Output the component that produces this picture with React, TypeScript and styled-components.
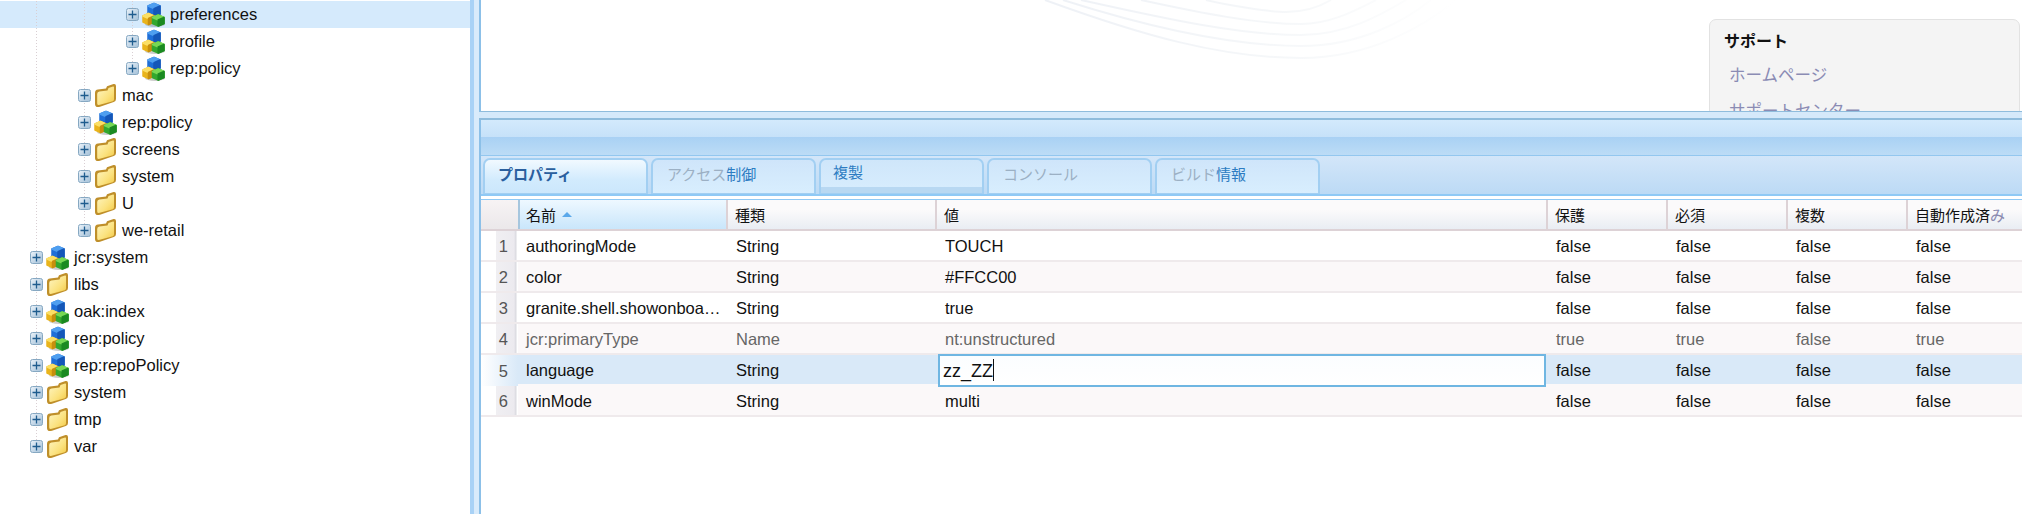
import React from "react";
import styled, { createGlobalStyle } from "styled-components";

const Global = createGlobalStyle`
  html, body { margin: 0; padding: 0; background: #fff; }
  body { font-family: "Liberation Sans", "Noto Sans CJK JP", sans-serif; color: #111; }
`;

const Root = styled.div`
  display: flex;
  width: 2022px;
  height: 514px;
  overflow: hidden;
`;

/* ---------- tree ---------- */
const TreePane = styled.div`
  width: 470px;
  flex: none;
  padding-top: 1px;
  background: #fff;
`;
const TreeRow = styled.div<{ $selected?: boolean }>`
  display: flex;
  align-items: stretch;
  height: 27px;
  padding-left: 12px;
  font-size: 16.5px;
  background: ${(p) => (p.$selected ? "#d5eafc" : "transparent")};
`;
const dotted = "repeating-linear-gradient(to bottom, #d9cfd3 0 1px, transparent 1px 3px)";
const Guide = styled.span`
  width: 48px;
  flex: none;
  background: ${dotted} 24px 0 / 1px 100% no-repeat;
`;
const ExpanderCell = styled.span<{ $last?: boolean }>`
  width: 31px;
  flex: none;
  display: flex;
  align-items: center;
  padding-left: 18px;
  box-sizing: border-box;
  background: ${dotted} 24px 0 / 1px ${(p) => (p.$last ? "50%" : "100%")} no-repeat;
`;
const NodeGlyph = styled.svg`
  width: 23px;
  height: 25px;
  margin-left: 3px;
  flex: none;
  align-self: center;
`;
const TreeLabel = styled.span`
  margin-left: 5px;
  line-height: 27px;
  white-space: nowrap;
`;

const Expander = () => (
  <svg width="13" height="13" viewBox="0 0 13 13" style={{ flex: "none" }}>
    <defs>
      <linearGradient id="exp" x1="0" y1="0" x2="1" y2="1">
        <stop offset="0" stopColor="#eaf2f9" />
        <stop offset="1" stopColor="#a3c0d8" />
      </linearGradient>
    </defs>
    <rect x="0.5" y="0.5" width="12" height="12" rx="2" fill="url(#exp)" stroke="#86a8c2" />
    <path d="M2.500 6.500h8M6.500 2.500v8" stroke="#1f5c8e" strokeWidth="1.300" />
  </svg>
);

const NodeIcon = () => (
  <NodeGlyph viewBox="0 0 23 25">
    <ellipse cx="13" cy="22" rx="10" ry="3" fill="#444" opacity="0.28" />
    <g strokeLinejoin="round" strokeWidth="1.500">
      <path d="M6 4l6-2.600L18 4v8l-6 2.600L6 12z" fill="#1f6fd8" stroke="#1f6fd8" />
      <path d="M6 4l6-2.600L18 4l-6 2.600z" fill="#4f9ff0" stroke="#4f9ff0" />
      <path d="M12 6.600L18 4v8l-6 2.600z" fill="#1557b8" stroke="#1557b8" />
      <path d="M1 14l5.500-2.500L12 14v6l-5.500 2.500L1 20z" fill="#e9b41c" stroke="#e9b41c" />
      <path d="M1 14l5.500-2.500L12 14l-5.500 2.500z" fill="#fbdf66" stroke="#fbdf66" />
      <path d="M6.500 16.500L12 14v6l-5.500 2.500z" fill="#c78e0e" stroke="#c78e0e" />
      <path d="M10.500 15.500l5.700-2.500 5.800 2.500v6L16.200 24l-5.700-2.500z" fill="#33a82f" stroke="#33a82f" />
      <path d="M10.500 15.500l5.700-2.500 5.800 2.500-5.800 2.500z" fill="#78d855" stroke="#78d855" />
      <path d="M16.200 18l5.800-2.500v6L16.200 24z" fill="#1b8a22" stroke="#1b8a22" />
    </g>
  </NodeGlyph>
);

const FolderIcon = () => (
  <NodeGlyph viewBox="0 0 23 25">
    <defs>
      <linearGradient id="fold" x1="0" y1="0" x2="1" y2="1">
        <stop offset="0" stopColor="#fef6c4" />
        <stop offset="0.6" stopColor="#fbe27f" />
        <stop offset="1" stopColor="#f3c945" />
      </linearGradient>
    </defs>
    <path d="M1 10q0-3 3-3.400l8-1 1-2.300 6.500-2.300Q22 .5 22 3v13q0 2.300-2.300 3L6 23.800Q1 25 1 21z" fill="#bf8f2a" />
    <path d="M3.200 11q0-2.300 2.300-2.600l8-1 1-2.300 4.500-1.600q1-.3 1 .7v12.400q0 1.200-1.200 1.600L5.800 21.800q-2.600.6-2.600-1.400z" fill="url(#fold)" />
  </NodeGlyph>
);

type Node = { level: number; name: string; kind: "node" | "folder"; last?: boolean; selected?: boolean };
const tree: Node[] = [
  { level: 3, name: "preferences", kind: "node", selected: true },
  { level: 3, name: "profile", kind: "node" },
  { level: 3, name: "rep:policy", kind: "node", last: true },
  { level: 2, name: "mac", kind: "folder" },
  { level: 2, name: "rep:policy", kind: "node" },
  { level: 2, name: "screens", kind: "folder" },
  { level: 2, name: "system", kind: "folder" },
  { level: 2, name: "U", kind: "folder" },
  { level: 2, name: "we-retail", kind: "folder", last: true },
  { level: 1, name: "jcr:system", kind: "node" },
  { level: 1, name: "libs", kind: "folder" },
  { level: 1, name: "oak:index", kind: "node" },
  { level: 1, name: "rep:policy", kind: "node" },
  { level: 1, name: "rep:repoPolicy", kind: "node" },
  { level: 1, name: "system", kind: "folder" },
  { level: 1, name: "tmp", kind: "folder" },
  { level: 1, name: "var", kind: "folder", last: true },
];

/* ---------- main ---------- */
const Splitter = styled.div`
  width: 5px;
  flex: none;
  background: #d9ebfb;
  border-left: 4px solid #a9d2f6;
`;
const Main = styled.div`
  flex: 1;
  min-width: 0;
  display: flex;
  flex-direction: column;
  background: #d5e9fa;
`;
const TopPanel = styled.div`
  position: relative;
  height: 111px;
  flex: none;
  display: flex;
  justify-content: flex-end;
  padding-right: 2px;
  background: #fff;
  border-left: 2px solid #8cc0e8;
  border-bottom: 1px solid #8fbcdc;
  overflow: hidden;
`;
const Swoosh = styled.svg`
  position: absolute;
  left: 0;
  top: 0;
  width: 1540px;
  height: 111px;
`;
const SupportBox = styled.div`
  position: relative;
  width: 311px;
  height: 130px;
  margin-top: 19px;
  box-sizing: border-box;
  padding: 11px 14px;
  background: #f4f4f4;
  border: 1px solid #e2e2e2;
  border-radius: 7px;
`;
const SupportTitle = styled.div`
  font-size: 16px;
  font-weight: 700;
  line-height: 22px;
  color: #111;
`;
const SupportLink = styled.div`
  margin-left: 5px;
  margin-top: 11px;
  font-size: 16.5px;
  line-height: 23px;
  color: #8b8cb4;
  & + & { margin-top: 13px; }
`;
const Band = styled.div`
  height: 6px;
  flex: none;
  border-bottom: 2px solid #8fbcdc;
`;
const Detail = styled.div`
  flex: 1;
  min-height: 0;
  display: flex;
  flex-direction: column;
  background: #fff;
  border-left: 2px solid #8cc0e8;
`;
const DetailHeader = styled.div`
  height: 35px;
  flex: none;
  background: linear-gradient(to bottom, #d3eafc 0, #c6e1f9 48%, #a9d1f4 49%, #bcdcf6 100%);
  border-bottom: 1px solid #93c7ef;
`;
const TabStrip = styled.div`
  display: flex;
  gap: 3.5px;
  height: 36px;
  flex: none;
  padding: 2px 0 0 2px;
  background: linear-gradient(to bottom, #d3e6f9 0, #bcdaf5 100%);
  border-bottom: 2px solid #8fc9f5;
`;
const Tab = styled.div<{ $active?: boolean; $raised?: boolean }>`
  width: 164.5px;
  box-sizing: border-box;
  height: 36px;
  padding: ${(p) => (p.$raised ? "2px 0 0 12px" : p.$active ? "4px 0 0 13px" : "4px 0 0 14px")};
  font-size: 15px;
  line-height: 22px;
  white-space: nowrap;
  border: 2px solid #a2cff2;
  border-bottom-width: 1px;
  border-radius: 7px 7px 0 0;
  color: ${(p) => (p.$active ? "#2a5f9e" : "#2d7cc2")};
  font-weight: ${(p) => (p.$active ? 700 : 400)};
  background: ${(p) =>
    p.$active
      ? "linear-gradient(to bottom, #f1f9ff 0, #d2ebfd 60%, #cbe7fc 100%)"
      : p.$raised
      ? "linear-gradient(to bottom, #cfe6fa 0, #d6ecfd 82%, #b8d8f2 83%, #b8d8f2 100%)"
      : "linear-gradient(to bottom, #cfe5fa 0, #d8eefe 100%)"};
`;
const Faded = styled.span`
  color: #9cb0c4;
`;
const Table = styled.div`
  padding-top: 2px;
  background: #fff;
`;
const columns = "37px 208px 209px 611px 120px 120px 120px 1fr";
const HeadRow = styled.div`
  display: grid;
  grid-template-columns: ${columns};
  height: 29px;
  margin-top: 1px;
  border-top: 1px solid #8fc9f5;
  border-bottom: 2px solid #ddd2d6;
`;
const HeadCell = styled.div<{ $sorted?: boolean; $blank?: boolean }>`
  display: flex;
  align-items: center;
  gap: 6px;
  padding-left: ${(p) => (p.$sorted ? "6px" : "7px")};
  font-size: 15px;
  white-space: nowrap;
  overflow: hidden;
  color: #111;
  border-left: ${(p) => (p.$blank ? "none" : p.$sorted ? "2px solid #a6c6de" : "2px solid #ddd2d6")};
  background: ${(p) =>
    p.$sorted
      ? "linear-gradient(to bottom, #eef8ff 0, #c9e6fb 100%)"
      : p.$blank
      ? "linear-gradient(to bottom, #f7f3f4 0, #ebe8ea 100%)"
      : "linear-gradient(to bottom, #fbfafb 0, #fbfafb 35%, #e9edf3 100%)"};
`;
const SortArrow = styled.span`
  width: 0;
  height: 0;
  border-left: 5px solid transparent;
  border-right: 5px solid transparent;
  border-bottom: 5px solid #5aa8ea;
`;
const FadedHead = styled.span`
  color: #8a8ab0;
`;
const Row = styled.div<{ $even?: boolean; $selected?: boolean }>`
  display: grid;
  grid-template-columns: ${columns};
  height: 29px;
  margin-bottom: 2.1px;
  align-items: stretch;
  font-size: 16.5px;
  background: ${(p) => (p.$selected ? "#d9e9f8" : p.$even ? "#fbf8f9" : "#fff")};
  box-shadow: 0 2px 0 ${(p) => (p.$selected ? "#fbf8f9" : "#efeaec")};
`;
const NumCell = styled.div<{ $selected?: boolean }>`
  display: flex;
  align-items: center;
  justify-content: flex-end;
  padding: 1px 10px 0 0;
  font-size: 16.5px;
  color: #555;
  background: ${(p) =>
    p.$selected
      ? "linear-gradient(to right, #fff 0, #d9e9f8 100%)"
      : "linear-gradient(to right, #fff 0, #fff 15px, #f0eff2 15px, #eceaef 33px, #d9d9df 35px, #fff 36px)"};
`;
const Cell = styled.div<{ $muted?: boolean; $first?: boolean }>`
  padding: 0 3px 0 ${(p) => (p.$first ? "8px" : "10px")};
  line-height: 31px;
  white-space: nowrap;
  overflow: hidden;
  text-overflow: ellipsis;
  color: ${(p) => (p.$muted ? "#666" : "#111")};
`;
const EditCell = styled.div`
  position: relative;
  z-index: 1;
  height: 33px;
  margin: -1px 0 0 3px;
  box-sizing: border-box;
  padding-left: 3px;
  border: 2px solid #6fb6e2;
  background: linear-gradient(to bottom, #fbfdff 0, #fff 100%);
  font-size: 18px;
  line-height: 30px;
  color: #111;
`;
const Caret = styled.span`
  display: inline-block;
  width: 1px;
  height: 22px;
  background: #111;
  vertical-align: -4px;
`;

const rows = [
  ["authoringMode", "String", "TOUCH", "false", "false", "false", "false"],
  ["color", "String", "#FFCC00", "false", "false", "false", "false"],
  ["granite.shell.showonboarding620", "String", "true", "false", "false", "false", "false"],
  ["jcr:primaryType", "Name", "nt:unstructured", "true", "true", "false", "true"],
  ["language", "String", "zz_ZZ", "false", "false", "false", "false"],
  ["winMode", "String", "multi", "false", "false", "false", "false"],
];

const arcs = [
  "M564 0C660 35 740 58 820 58C890 58 945 25 975 0",
  "M582 0C670 28 750 46 820 46C880 46 925 20 950 0",
  "M600 0C690 20 760 35 820 35C865 35 900 15 925 0",
  "M660 0C720 13 775 24 820 24C850 24 875 10 895 0",
  "M725 0C750 6 790 12 805 12C825 12 840 6 850 0",
];

export default function App() {
  return (
    <Root>
      <Global />
      <TreePane>
        {tree.map((n, i) => (
          <TreeRow key={i} $selected={n.selected}>
            {Array.from({ length: n.level - 1 }).map((_, g) => (
              <Guide key={g} />
            ))}
            <ExpanderCell $last={n.last}>
              <Expander />
            </ExpanderCell>
            {n.kind === "node" ? <NodeIcon /> : <FolderIcon />}
            <TreeLabel>{n.name}</TreeLabel>
          </TreeRow>
        ))}
      </TreePane>
      <Splitter />
      <Main>
        <TopPanel>
          <Swoosh viewBox="0 0 1540 111" fill="none">
            <defs>
              <linearGradient id="arcFade" gradientUnits="userSpaceOnUse" x1="564" y1="0" x2="975" y2="0">
                <stop offset="0" stopColor="#eef1f6" />
                <stop offset="0.55" stopColor="#f5f7f9" />
                <stop offset="1" stopColor="#ffffff" />
              </linearGradient>
            </defs>
            {arcs.map((d, i) => (
              <path key={i} d={d} stroke="url(#arcFade)" strokeWidth="2" />
            ))}
          </Swoosh>
          <SupportBox>
            <SupportTitle>サポート</SupportTitle>
            <SupportLink>ホームページ</SupportLink>
            <SupportLink>サポートセンター</SupportLink>
          </SupportBox>
        </TopPanel>
        <Band />
        <Detail>
          <DetailHeader />
          <TabStrip>
            <Tab $active>プロパティ</Tab>
            <Tab>
              <Faded>アクセス</Faded>制御
            </Tab>
            <Tab $raised>複製</Tab>
            <Tab>
              <Faded>コンソール</Faded>
            </Tab>
            <Tab>
              <Faded>ビルド</Faded>情報
            </Tab>
          </TabStrip>
          <Table>
            <HeadRow>
              <HeadCell $blank />
              <HeadCell $sorted>
                名前
                <SortArrow />
              </HeadCell>
              <HeadCell>種類</HeadCell>
              <HeadCell>値</HeadCell>
              <HeadCell>保護</HeadCell>
              <HeadCell>必須</HeadCell>
              <HeadCell>複数</HeadCell>
              <HeadCell>
                <span>
                  自動作成済<FadedHead>み</FadedHead>
                </span>
              </HeadCell>
            </HeadRow>
            {rows.map((r, i) => {
              const selected = i === 4;
              const muted = i === 3;
              return (
                <Row key={i} $even={i % 2 === 1} $selected={selected}>
                  <NumCell $selected={selected}>{i + 1}</NumCell>
                  {r.map((v, c) =>
                    selected && c === 2 ? (
                      <EditCell key={c}>
                        {v}
                        <Caret />
                      </EditCell>
                    ) : (
                      <Cell key={c} $muted={muted} $first={c === 0}>
                        {v}
                      </Cell>
                    )
                  )}
                </Row>
              );
            })}
          </Table>
        </Detail>
      </Main>
    </Root>
  );
}
